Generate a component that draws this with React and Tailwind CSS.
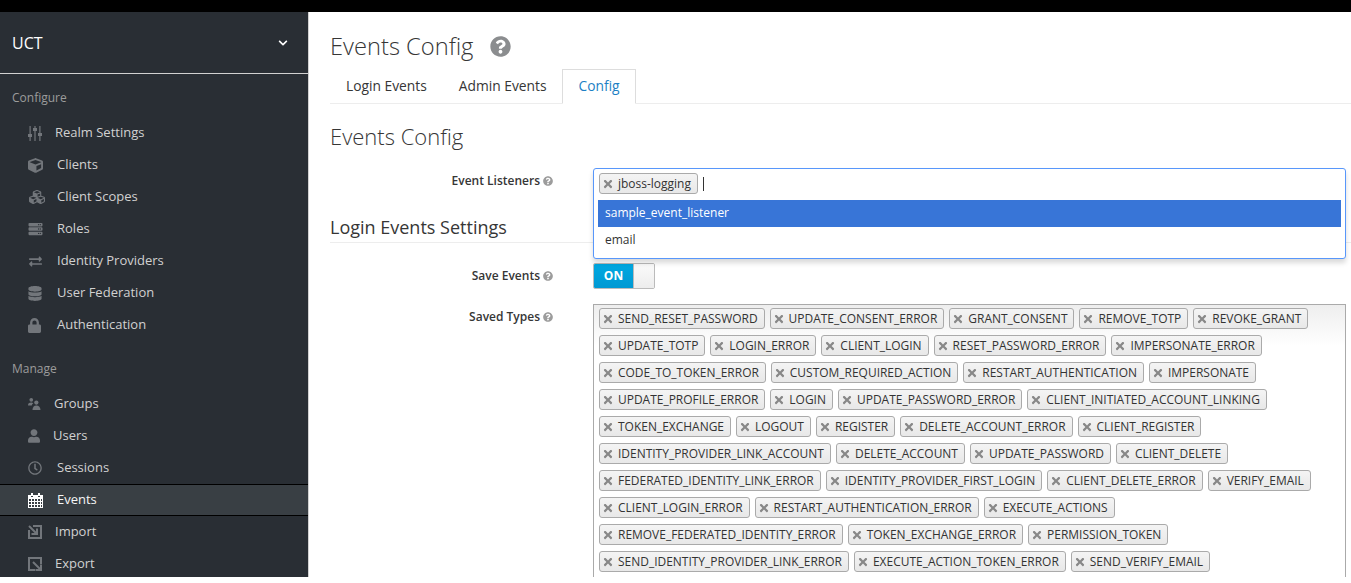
import {
  FaCube,
  FaCubes,
  FaDatabase,
  FaExchangeAlt,
  FaLock,
  FaUser,
  FaRegClock,
  FaQuestionCircle,
  FaServer,
  FaChevronDown,
  FaTimes,
} from 'react-icons/fa'

function SlidersIcon({ className }) {
  return (
    <svg viewBox="0 0 14 15" className={className} fill="currentColor">
      <path d="M1.5 0h1.2v8h-1.2zM1.5 11h1.2v4h-1.2zM6.4 0h1.2v2h-1.2zM6.4 5h1.2v10h-1.2zM11.3 0h1.2v7h-1.2zM11.3 10h1.2v5h-1.2z" />
      <path d="M0 8h4v3H0zM5 2h4v3H5zM10 7h4v3h-4z" />
    </svg>
  )
}

function GroupsIcon({ className }) {
  return (
    <svg viewBox="0 0 14 13" className={className} fill="currentColor">
      <circle cx="3.5" cy="2" r="2" />
      <path d="M0 8c0-2 1-3 3.5-3 1 0 1.7.2 2.2.6C4.7 6.3 4.2 7 4 8z" />
      <circle cx="9" cy="5" r="2.3" />
      <path d="M4.8 13c0-3 1.500-5 4.200-5s4.500 2 4.500 5z" />
    </svg>
  )
}

function ImportIcon({ className }) {
  return (
    <svg viewBox="0 0 14 14" className={className} fill="none" stroke="currentColor" strokeWidth="2">
      <path d="M1 5V13H13V1H5" />
      <path d="M1 1L8 8M9 3.5V9H3.5" />
    </svg>
  )
}

function ExportIcon({ className }) {
  return (
    <svg viewBox="0 0 14 14" className={className} fill="none" stroke="currentColor" strokeWidth="2">
      <path d="M13 7V1H1V13H7" />
      <path d="M5 5L12.5 12.5M13 7.5V13H7.5" />
    </svg>
  )
}

function CalendarIcon({ className }) {
  return (
    <svg viewBox="0 0 15 15" className={className} fill="currentColor">
      <path d="M3 0h2v3H3zM10 0h2v3h-2z" />
      <path fillRule="evenodd" d="M0 2h3v2h2V2h5v2h2V2h3v13H0zM1 6v2h2V6zM4 6v2h2V6zM7 6v2h2V6zM10 6v2h2V6zM13 6v2h1V6zM1 9v2h2V9zM4 9v2h2V9zM7 9v2h2V9zM10 9v2h2V9zM13 9v2h1V9zM1 12v2h2v-2zM4 12v2h2v-2zM7 12v2h2v-2zM10 12v2h2v-2zM13 12v2h1v-2z" />
    </svg>
  )
}

const configureItems = [
  { label: 'Realm Settings', icon: SlidersIcon, size: 'w-[14px] h-[15px]', width: 'w-[27px]' },
  { label: 'Clients', icon: FaCube, size: 'w-[15px] h-[15px]', width: 'w-[29px]' },
  { label: 'Client Scopes', icon: FaCubes, size: 'w-[18px] h-[16px]', width: 'w-[29px]' },
  { label: 'Roles', icon: FaServer, size: 'w-[15px] h-[14px]', width: 'w-[29px]' },
  { label: 'Identity Providers', icon: FaExchangeAlt, size: 'w-[15px] h-[13px]', width: 'w-[29px]' },
  { label: 'User Federation', icon: FaDatabase, size: 'w-[14px] h-[15px]', width: 'w-[29px]' },
  { label: 'Authentication', icon: FaLock, size: 'w-[13px] h-[15px]', width: 'w-[29px]' },
]

const manageItems = [
  { label: 'Groups', icon: GroupsIcon, size: 'w-[13px] h-[12px]', width: 'w-[26px]' },
  { label: 'Users', icon: FaUser, size: 'w-[12px] h-[14px]', width: 'w-[25px]' },
  { label: 'Sessions', icon: FaRegClock, size: 'w-[14px] h-[14px]', width: 'w-[29px]' },
  { label: 'Events', icon: CalendarIcon, size: 'w-[15px] h-[15px]', width: 'w-[29px]', active: true },
  { label: 'Import', icon: ImportIcon, size: 'w-[14px] h-[14px]', width: 'w-[27px]' },
  { label: 'Export', icon: ExportIcon, size: 'w-[14px] h-[14px]', width: 'w-[27px]' },
]

const savedTypes = [
  'SEND_RESET_PASSWORD', 'UPDATE_CONSENT_ERROR', 'GRANT_CONSENT', 'REMOVE_TOTP', 'REVOKE_GRANT',
  'UPDATE_TOTP', 'LOGIN_ERROR', 'CLIENT_LOGIN', 'RESET_PASSWORD_ERROR', 'IMPERSONATE_ERROR',
  'CODE_TO_TOKEN_ERROR', 'CUSTOM_REQUIRED_ACTION', 'RESTART_AUTHENTICATION', 'IMPERSONATE',
  'UPDATE_PROFILE_ERROR', 'LOGIN', 'UPDATE_PASSWORD_ERROR', 'CLIENT_INITIATED_ACCOUNT_LINKING',
  'TOKEN_EXCHANGE', 'LOGOUT', 'REGISTER', 'DELETE_ACCOUNT_ERROR', 'CLIENT_REGISTER',
  'IDENTITY_PROVIDER_LINK_ACCOUNT', 'DELETE_ACCOUNT', 'UPDATE_PASSWORD', 'CLIENT_DELETE',
  'FEDERATED_IDENTITY_LINK_ERROR', 'IDENTITY_PROVIDER_FIRST_LOGIN', 'CLIENT_DELETE_ERROR', 'VERIFY_EMAIL',
  'CLIENT_LOGIN_ERROR', 'RESTART_AUTHENTICATION_ERROR', 'EXECUTE_ACTIONS',
  'REMOVE_FEDERATED_IDENTITY_ERROR', 'TOKEN_EXCHANGE_ERROR', 'PERMISSION_TOKEN',
  'SEND_IDENTITY_PROVIDER_LINK_ERROR', 'EXECUTE_ACTION_TOKEN_ERROR', 'SEND_VERIFY_EMAIL',
]

function NavItem({ item }) {
  const Icon = item.icon
  return (
    <div
      className={`h-8 flex items-center pl-7 text-[13px] ${
        item.active ? 'bg-[#393f44] border-y border-black text-[#f5f5f5]' : 'text-[#d1d1d1]'
      }`}
    >
      <span className={`${item.width} shrink-0 flex items-center`}>
        <Icon className={`${item.size} ${item.active ? 'text-white' : 'text-[#72767b]'}`} />
      </span>
      {item.label}
    </div>
  )
}

function Tag({ label }) {
  return (
    <span className="flex items-center h-[21px] mr-[5px] mt-[3px] pl-[2px] pr-[6px] border border-[#aaaaaa] rounded-[3px] bg-gradient-to-b from-[#f4f4f4] to-[#e8e8e8] text-[11.97px] text-[#333333] whitespace-nowrap">
      <FaTimes className="w-3 h-3 mr-1 text-[#888888]" />
      {label}
    </span>
  )
}

function FormLabel({ children, className = '' }) {
  return (
    <div className={`w-[228px] pr-[5px] flex justify-end items-center text-[12px] font-semibold text-[#363636] shrink-0 ${className}`}>
      {children}
      <FaQuestionCircle className="w-[10px] h-[10px] text-[#9c9c9c] ml-[3px] shrink-0" />
    </div>
  )
}

export default function App() {
  return (
    <div className="h-[583px] bg-white overflow-hidden font-['Open_Sans',sans-serif]">
      <div className="h-3 bg-black" />
      <div className="h-[565px] flex overflow-hidden">
        <aside className="w-[309px] shrink-0 bg-[#292e34] border-r border-[#d1d1d1]">
          <div className="h-[62px] pt-[1px] flex items-center justify-between pl-3 pr-5 border-b border-[#d1d1d1] text-white text-[16px]">
            UCT
            <FaChevronDown className="w-[10px] h-[10px]" />
          </div>
          <div className="pt-[15px] pl-3 h-[32px] text-[12px] text-[#9c9c9c]">Configure</div>
          <nav className="mt-[11px]">
            {configureItems.map((item) => (
              <NavItem key={item.label} item={item} />
            ))}
          </nav>
          <div className="mt-[17px] pl-3 h-[28px] pt-[2px] text-[12px] text-[#9c9c9c]">Manage</div>
          <nav className="mt-[2px]">
            {manageItems.map((item) => (
              <NavItem key={item.label} item={item} />
            ))}
          </nav>
        </aside>

        <main className="flex-1 min-w-0 pl-[21px] text-[#363636]">
          <h1 className="mt-[18px] flex items-center text-[23.7px] leading-[32px] font-light">
            Events Config
            <FaQuestionCircle className="ml-[17px] w-[21px] h-[21px] text-[#8b8d8f]" />
          </h1>
          <div className="mt-[7px] h-[35px] flex border-b border-[#ededed] text-[13.8px]">
            <div className="px-4 flex items-center">Login Events</div>
            <div className="pl-4 pr-[15px] flex items-center">Admin Events</div>
            <div className="h-[35px] pl-4 pr-[15px] flex items-center border border-b-white border-[#dddddd] text-[#1d7fc4] bg-white">Config</div>
          </div>
          <h2 className="mt-[18px] text-[22px] leading-[28px] font-light">Events Config</h2>

          <div className="relative mt-[18px] flex">
            <FormLabel>Event Listeners</FormLabel>
            <div className="absolute left-[263px] top-0 w-[753px] h-[91px] z-10 bg-white border border-[#5897fb] rounded-[3px] shadow-[0_4px_5px_rgba(0,0,0,0.15)]">
              <div className="flex items-center h-[31px] pl-[5px] pb-[5px]">
                <Tag label="jboss-logging" />
                <span className="mt-1 w-px h-[14px] bg-[#333333]" />
              </div>
              <div className="mx-1 h-[27px] pl-[7px] pb-px flex items-center bg-[#3875d7] text-white text-[12px]">sample_event_listener</div>
              <div className="mx-1 h-[27px] pl-[7px] pb-px flex items-center text-[#333333] text-[12px]">email</div>
            </div>
            <div className="h-[26px]" />
          </div>

          <h2 className="mt-[21px] text-[18px] leading-[24px] pb-[3px] border-b border-[#ededed]">Login Events Settings</h2>

          <div className="mt-[20px] flex">
            <FormLabel>Save Events</FormLabel>
            <div className="ml-[35px] flex h-[26px] w-[62px] border border-[#bbbbbb] rounded-[2px] overflow-hidden text-[12px] font-bold text-white">
              <div className="w-[39px] flex items-center justify-center bg-gradient-to-b from-[#00a8e1] to-[#0099d3]">ON</div>
              <div className="flex-1 border-l border-[#bbbbbb] bg-gradient-to-b from-[#fafafa] to-[#ededed]" />
            </div>
          </div>

          <div className="mt-[15px] flex items-start">
            <FormLabel className="mt-1">Saved Types</FormLabel>
            <div className="ml-[35px] w-[753px] pl-[5px] pr-1 pb-2 flex flex-wrap content-start gap-y-[3px] border border-[#aaaaaa] bg-gradient-to-b from-[#eeeeee] to-white to-[15%]">
              {savedTypes.map((t) => (
                <Tag key={t} label={t} />
              ))}
            </div>
          </div>
        </main>
      </div>
    </div>
  )
}
